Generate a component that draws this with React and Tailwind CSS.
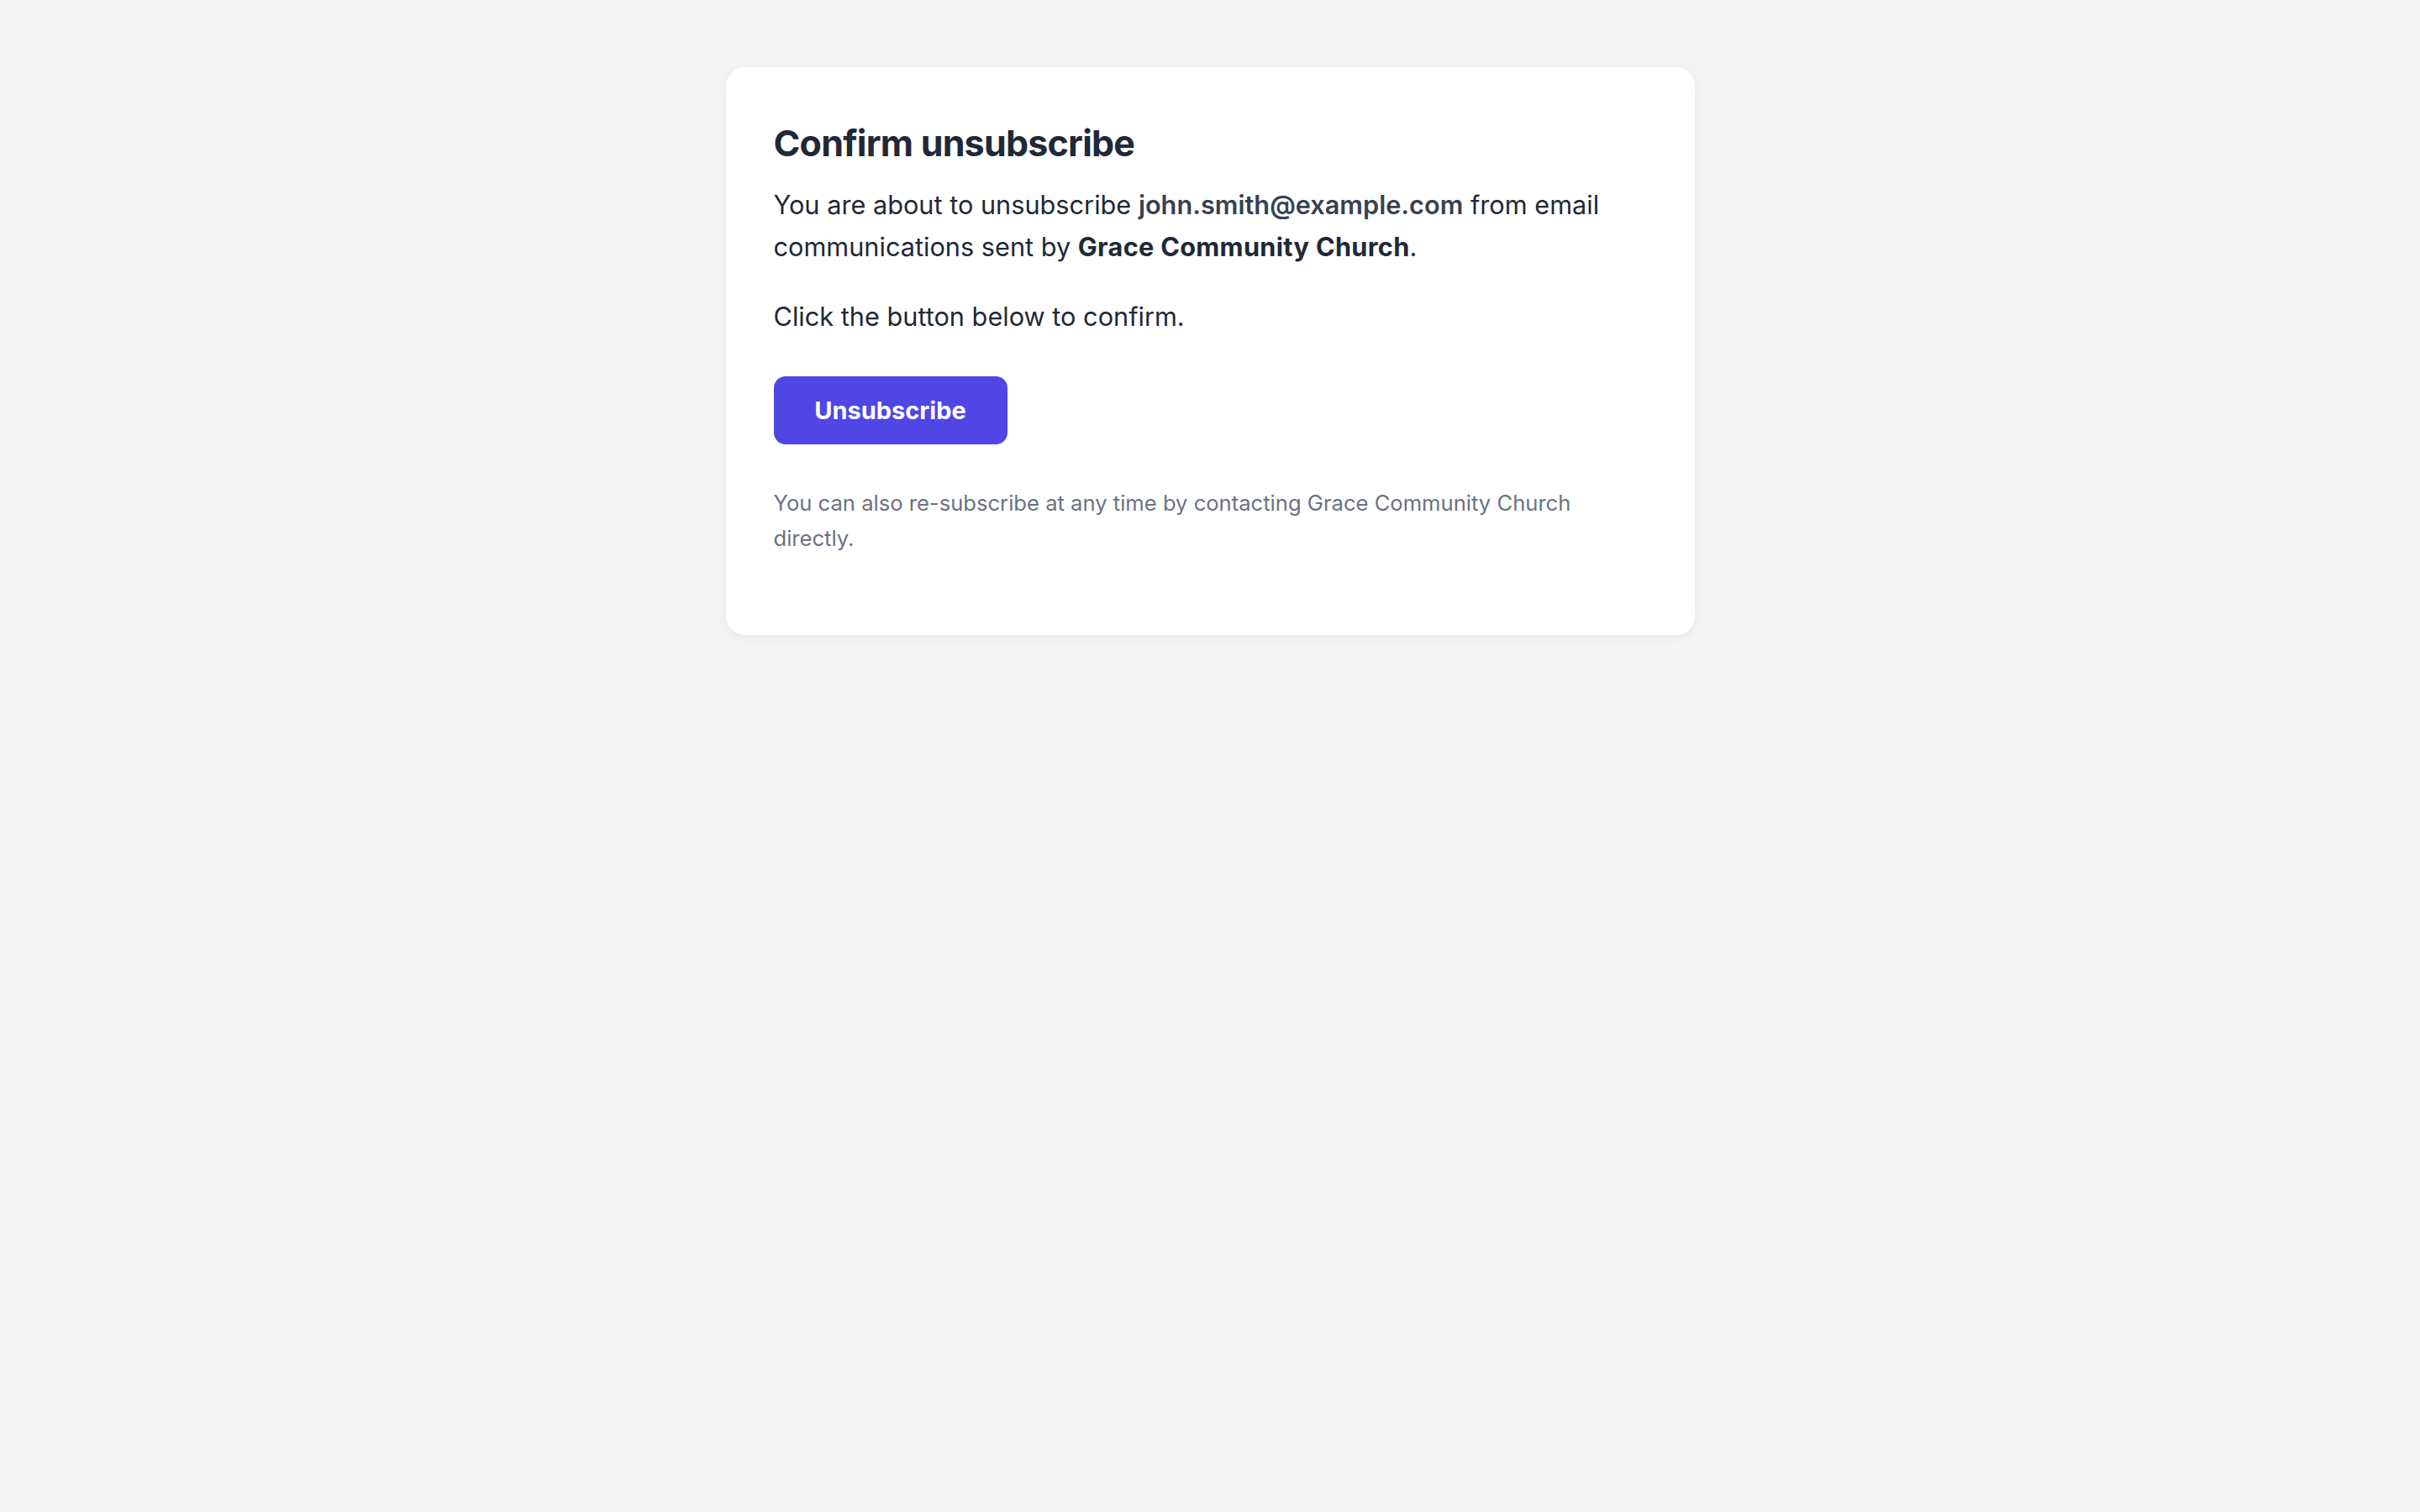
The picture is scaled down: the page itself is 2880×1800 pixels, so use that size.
export default function App() {
  return (
    <div
      className="min-h-screen bg-[#f4f4f4] pt-[80px]"
      style={{ fontFamily: "Inter, 'Noto Sans', sans-serif" }}
    >
      <div className="mx-auto w-[1153px] rounded-[22px] bg-white px-[57px] pt-[61px] pb-[94px] shadow-[0_2px_12px_rgba(0,0,0,0.06)]">
        <h1 className="text-[43px] font-bold leading-[58px] tracking-[-0.018em] text-[#1f2937]">
          Confirm unsubscribe
        </h1>
        <p className="mt-[20px] text-[30.7px] leading-[50px] text-[#1f2937]">
          You are about to unsubscribe{" "}
          <span className="font-semibold text-[#374151]">john.smith@example.com</span>{" "}
          from email communications sent by{" "}
          <span className="font-bold tracking-[0.01em] text-[#1f2937]">Grace Community Church</span>.
        </p>
        <p className="mt-[33px] text-[30.7px] leading-[50px] text-[#1f2937]">
          Click the button below to confirm.
        </p>
        <button
          type="button"
          className="mt-[46px] h-[81px] w-[278px] rounded-[14px] bg-[#4f46e5] text-[29px] font-bold text-white"
        >
          Unsubscribe
        </button>
        <p className="mt-[49px] text-[25.6px] leading-[42px] text-[#6b7280]">
          You can also re-subscribe at any time by contacting Grace Community Church directly.
        </p>
      </div>
    </div>
  );
}
